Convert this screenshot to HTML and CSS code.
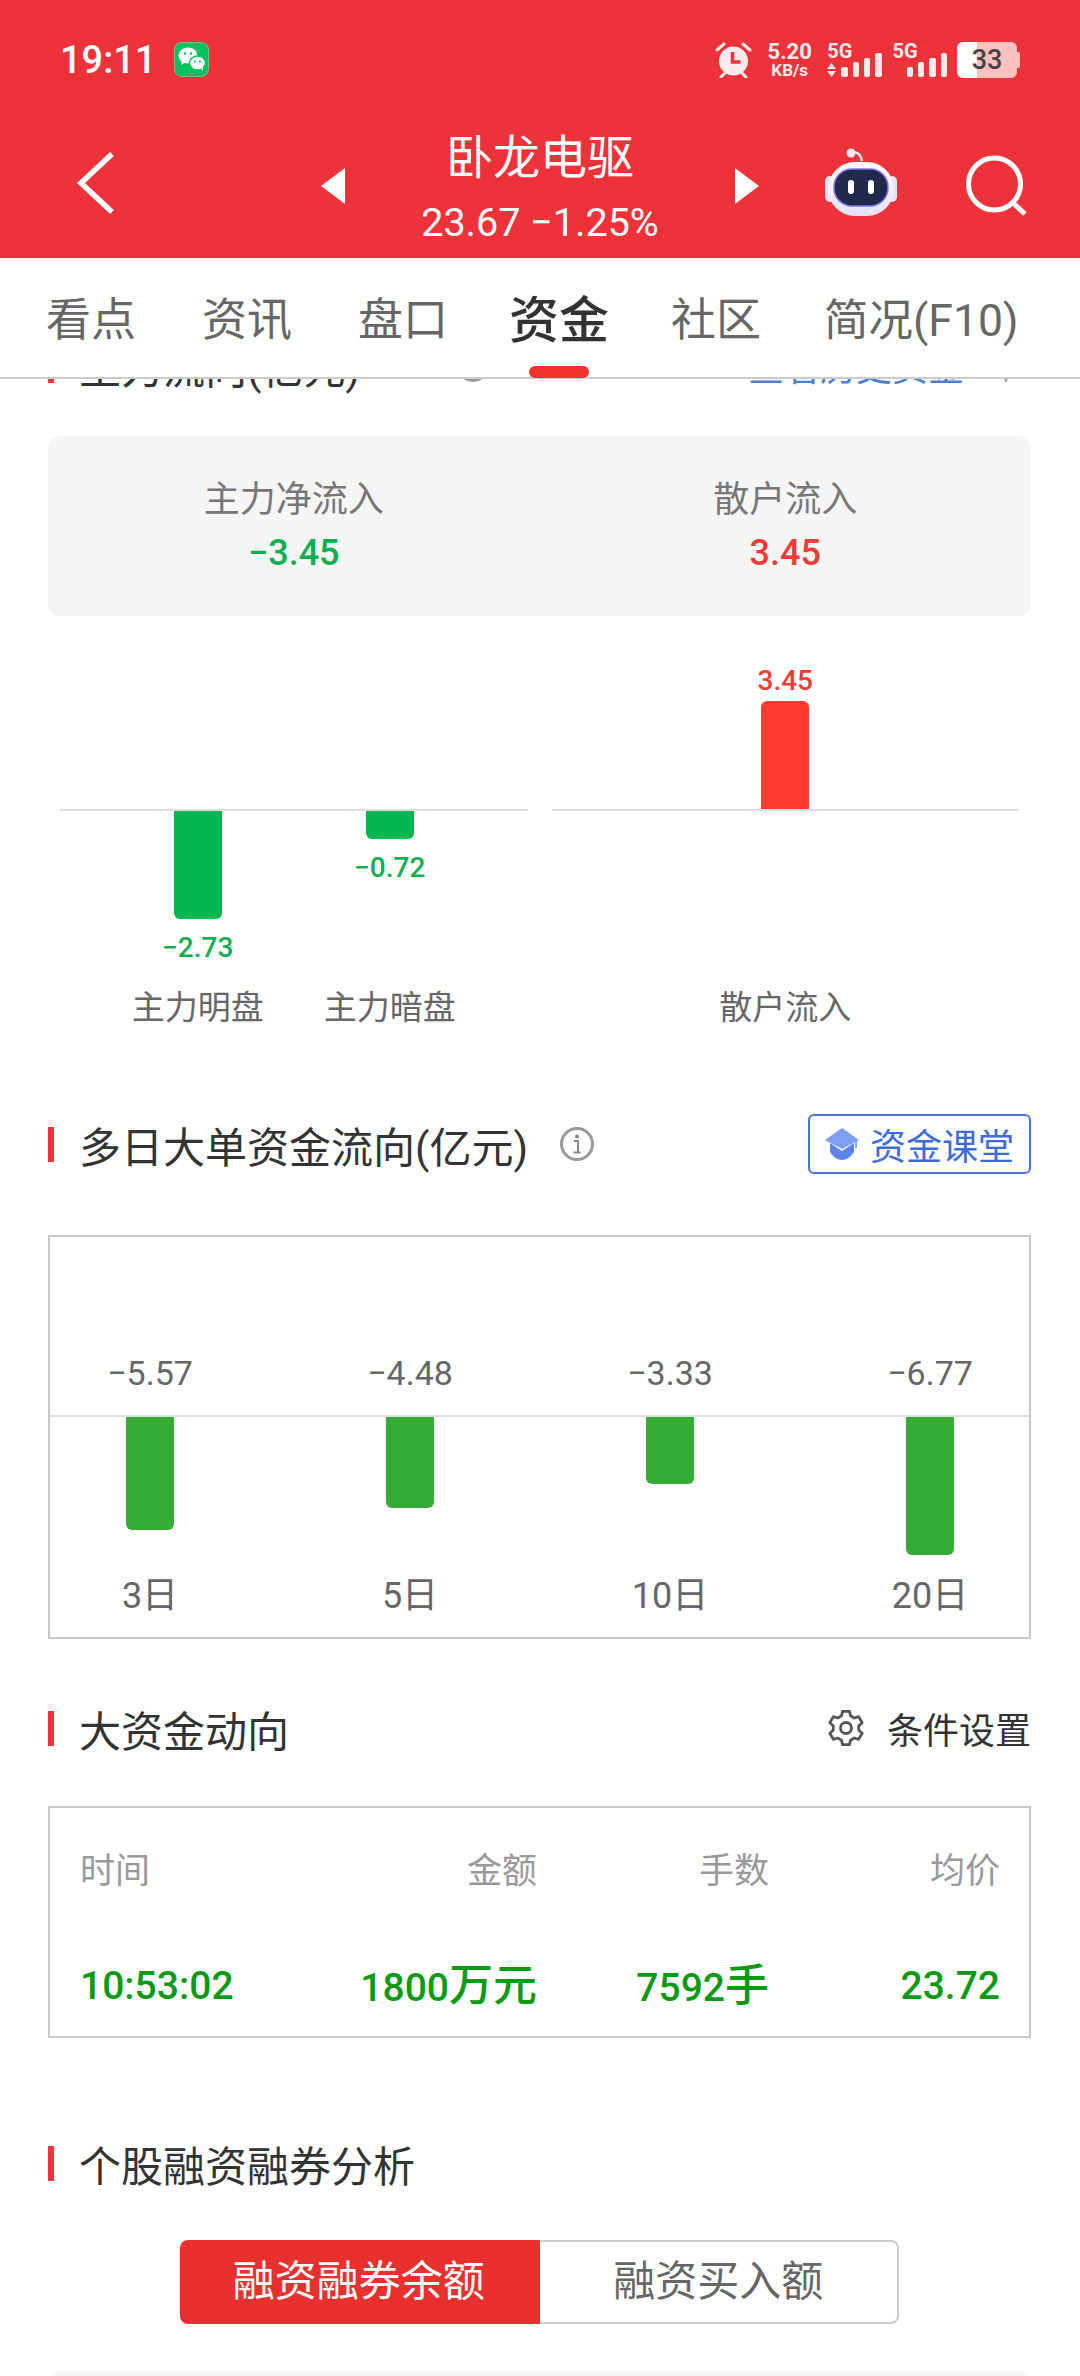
FILE: index.html
```html
<!DOCTYPE html>
<html lang="zh-CN">
<head>
    <meta charset="UTF-8">
    <meta name="viewport" content="width=device-width, initial-scale=1.0">
    <title>卧龙电驱 资金</title>
    <link rel="stylesheet" href="styles.css">
</head>
<body>
<div class="phone">
    <header class="topbar">
        <div class="status">
            <span class="clock">19:11</span>
            <svg class="wechat" width="35" height="35" viewBox="0 0 35 35">
                <rect x="0.5" y="0.5" width="34" height="34" rx="7" fill="#07c160" stroke="#7fb98a"/>
                <ellipse cx="14" cy="13.5" rx="9.5" ry="8" fill="#fff"/>
                <path d="M8 19l-1 4 5-2.500z" fill="#fff"/>
                <ellipse cx="23.500" cy="21" rx="8" ry="7" fill="#fff" stroke="#07c160" stroke-width="1.500"/>
                <path d="M27 26.500l2 2.500 0-4z" fill="#fff"/>
                <circle cx="11" cy="11.500" r="1.300" fill="#07c160"/>
                <circle cx="17" cy="11.500" r="1.300" fill="#07c160"/>
                <circle cx="21" cy="19.500" r="1.100" fill="#07c160"/>
                <circle cx="26" cy="19.500" r="1.100" fill="#07c160"/>
            </svg>
            <div class="status-right">
                <svg class="alarm" width="37" height="36" viewBox="0 0 37 36">
                    <circle cx="18.500" cy="19" r="14.500" fill="#fdeaea"/>
                    <path d="M2 8l7-6M35 8l-7-6M6 35l4-4M31 35l-4-4" stroke="#fdeaea" stroke-width="3" stroke-linecap="round"/>
                    <path d="M17.500 10v10h8" fill="none" stroke="#ee323a" stroke-width="3.500"/>
                </svg>
                <div class="netspeed"><b>5.20</b><span>KB/s</span></div>
                <div class="sig">
                    <div class="sig-label">
                        <span>5G</span>
                        <svg width="9" height="14" viewBox="0 0 9 14"><path d="M4.500 0l4.500 6h-9zM4.500 14l4.500-6h-9z" fill="#fdeaea"/></svg>
                    </div>
                    <div class="bars"><i class="b1"></i><i class="b2"></i><i class="b3"></i><i class="b4"></i></div>
                </div>
                <div class="sig">
                    <div class="sig-label"><span>5G</span></div>
                    <div class="bars"><i class="b1"></i><i class="b2"></i><i class="b3"></i><i class="b4"></i></div>
                </div>
                <div class="battery"><span>33</span></div>
                <i class="battery-nub"></i>
            </div>
        </div>
        <div class="nav">
            <svg class="back" width="50" height="70" viewBox="0 0 50 70">
                <path d="M42 6L11 35l31 29" fill="none" stroke="#fff" stroke-width="5.500"/>
            </svg>
            <span class="tri tri-left"></span>
            <div class="stock">
                <div class="stock-name">卧龙电驱</div>
                <div class="stock-price">23.67 −1.25%</div>
            </div>
            <span class="tri tri-right"></span>
            <svg class="robot" width="80" height="72" viewBox="0 0 80 72">
                <defs>
                    <linearGradient id="robotShell" x1="0" y1="0" x2="0" y2="1">
                        <stop offset="0" stop-color="#ffffff"/>
                        <stop offset="1" stop-color="#e4e2f6"/>
                    </linearGradient>
                </defs>
                <circle cx="30" cy="5" r="4.500" fill="#f3e6ee"/>
                <path d="M32 4c5 0 8 3 9 9" fill="none" stroke="#f3e6ee" stroke-width="2.500"/>
                <rect x="4" y="28" width="10" height="26" rx="5" fill="#e4e2f5"/>
                <rect x="66" y="28" width="10" height="26" rx="5" fill="#e4e2f5"/>
                <rect x="7" y="14" width="66" height="54" rx="27" fill="url(#robotShell)"/>
                <rect x="13" y="21" width="54" height="37" rx="18" fill="#1f2a4c" stroke="#8a6fe0" stroke-width="1.500"/>
                <rect x="27" y="32" width="6" height="14" rx="3" fill="#fff"/>
                <rect x="47" y="32" width="6" height="14" rx="3" fill="#fff"/>
            </svg>
            <svg class="search" width="70" height="70" viewBox="0 0 70 70">
                <circle cx="32.500" cy="35" r="26" fill="none" stroke="#fff" stroke-width="5"/>
                <path d="M51 54l12 11" stroke="#fff" stroke-width="5"/>
            </svg>
        </div>
    </header>

    <nav class="tabs">
        <span class="tab">看点</span>
        <span class="tab">资讯</span>
        <span class="tab">盘口</span>
        <span class="tab tab-active">资金<i class="tab-bar"></i></span>
        <span class="tab">社区</span>
        <span class="tab">简况(F10)</span>
    </nav>

    <main class="content">
        <!-- first section is scrolled under the tabs -->
        <div class="sec-head sec-scrolled">
            <span class="sec-title">主力流向(亿元)</span>
            <svg class="info info-first" width="36" height="36" viewBox="0 0 36 36">
                <circle cx="18" cy="18" r="15.500" fill="none" stroke="#999" stroke-width="3"/>
            </svg>
            <span class="sec-link">查看历史资金</span>
            <svg class="sec-chevron" width="16" height="24" viewBox="0 0 16 24">
                <path d="M2 10l6 12 6-12" fill="none" stroke="#aaa" stroke-width="2"/>
            </svg>
        </div>

        <div class="summary">
            <div class="summary-item">
                <div class="summary-label">主力净流入</div>
                <div class="summary-val down">−3.45</div>
            </div>
            <div class="summary-item">
                <div class="summary-label">散户流入</div>
                <div class="summary-val up">3.45</div>
            </div>
        </div>

        <div class="flow">
            <div class="flow-panel">
                <div class="flow-up"></div>
                <div class="flow-down">
                    <div class="flow-cell">
                        <div class="flow-bar bar-down" style="height: 108px"></div>
                        <div class="flow-num num-below down">−2.73</div>
                    </div>
                    <div class="flow-cell">
                        <div class="flow-bar bar-down" style="height: 28px"></div>
                        <div class="flow-num num-below down">−0.72</div>
                    </div>
                </div>
                <div class="flow-names">
                    <div class="flow-cell">主力明盘</div>
                    <div class="flow-cell">主力暗盘</div>
                </div>
            </div>
            <div class="flow-panel">
                <div class="flow-up">
                    <div class="flow-cell">
                        <div class="flow-num num-above up">3.45</div>
                        <div class="flow-bar bar-up" style="height: 108px"></div>
                    </div>
                </div>
                <div class="flow-down"></div>
                <div class="flow-names">
                    <div class="flow-cell">散户流入</div>
                </div>
            </div>
        </div>

        <div class="sec-head sec-multi">
            <span class="sec-title">多日大单资金流向(亿元)</span>
            <svg class="info" width="36" height="36" viewBox="0 0 36 36">
                <circle cx="18" cy="18" r="15.500" fill="none" stroke="#999" stroke-width="3"/>
                <circle cx="18" cy="10.500" r="2" fill="#888"/>
                <path d="M15 15h4v11M14.500 26.500h7" fill="none" stroke="#888" stroke-width="2"/>
            </svg>
            <div class="class-btn">
                <svg width="34" height="32" viewBox="0 0 34 32">
                    <path d="M5 15v9c3 5 8 8 12 8s9-3 12-8v-9l-12 8z" fill="#5b84f0"/>
                    <path d="M0 12L17 0l17 12-17 9z" fill="#7d9ff2"/>
                    <path d="M31 13v7" stroke="#7d9ff2" stroke-width="2"/>
                </svg>
                <span>资金课堂</span>
            </div>
        </div>

        <div class="box days">
            <div class="days-row days-nums">
                <div>−5.57</div>
                <div>−4.48</div>
                <div>−3.33</div>
                <div>−6.77</div>
            </div>
            <div class="days-row days-bars">
                <div><i class="day-bar" style="height: 113px"></i></div>
                <div><i class="day-bar" style="height: 91px"></i></div>
                <div><i class="day-bar" style="height: 67px"></i></div>
                <div><i class="day-bar" style="height: 138px"></i></div>
            </div>
            <div class="days-row days-names">
                <div>3日</div>
                <div>5日</div>
                <div>10日</div>
                <div>20日</div>
            </div>
        </div>

        <div class="sec-head sec-big">
            <span class="sec-title">大资金动向</span>
            <svg class="gear" width="38" height="38" viewBox="-1 -1 38 38">
                <path d="M13.55 5.78L14.47 1.37H21.53L22.45 5.78L26.36 8.04L30.63 6.62L34.17 12.75L30.80 15.74V20.26L34.17 23.25L30.63 29.38L26.36 27.96L22.45 30.22L21.53 34.63H14.47L13.55 30.22L9.64 27.96L5.37 29.38L1.83 23.25L5.20 20.26V15.74L1.83 12.75L5.37 6.62L9.64 8.04z" fill="none" stroke="#555" stroke-width="2.800" stroke-linejoin="round"/>
                <circle cx="18" cy="18" r="5.500" fill="none" stroke="#555" stroke-width="2.800"/>
            </svg>
            <span class="sec-setting">条件设置</span>
        </div>

        <div class="box trades">
            <div class="trade-row trade-head">
                <div>时间</div>
                <div>金额</div>
                <div>手数</div>
                <div>均价</div>
            </div>
            <div class="trade-row trade-vals">
                <div>10:53:02</div>
                <div>1800<span class="unit">万元</span></div>
                <div>7592<span class="unit">手</span></div>
                <div>23.72</div>
            </div>
        </div>

        <div class="sec-head sec-margin">
            <span class="sec-title">个股融资融券分析</span>
        </div>

        <div class="seg">
            <div class="seg-item seg-on">融资融券余额</div>
            <div class="seg-item">融资买入额</div>
        </div>

        <div class="next-card"></div>
    </main>
</div>
</body>
</html>
```

FILE: styles.css
```css
* {
    box-sizing: border-box;
}
body {
    margin: 0;
    background: white;
    font-family: Roboto, "Noto Sans CJK SC", sans-serif;
    color: #333;
}
.phone {
    width: 1080px;
    height: 2376px;
    overflow: hidden;
    display: flex;
    flex-direction: column;
}

/* red header */
.topbar {
    height: 258px;
    background: #ee323a;
    color: white;
}
.status {
    height: 96px;
    padding: 42px 60px 0 60px;
    display: flex;
    align-items: flex-start;
}
.clock {
    font-size: 38px;
    font-weight: 500;
    line-height: 36px;
}
.wechat {
    margin-left: 18px;
}
.status-right {
    margin-left: auto;
    display: flex;
    align-items: flex-start;
    color: #fdeaea;
}
.netspeed {
    margin-left: 15px;
    width: 45px;
    text-align: center;
    display: flex;
    flex-direction: column;
    align-items: center;
}
.netspeed b {
    font-size: 22px;
    line-height: 20px;
    font-weight: 700;
}
.netspeed span {
    font-size: 17px;
    line-height: 16px;
    font-weight: 700;
}
.sig {
    height: 36px;
    display: flex;
    margin-left: 15px;
}
.sig + .sig {
    margin-left: 11px;
}
.sig-label {
    width: 23px;
    font-size: 20px;
    font-weight: 700;
    line-height: 18px;
    display: flex;
    flex-direction: column;
    gap: 3px;
}
.bars {
    margin-left: -9px;
    height: 35px;
    display: flex;
    align-items: flex-end;
    gap: 4.8px;
}
.bars i {
    display: block;
    width: 6.5px;
    background: #fdeaea;
    border-radius: 2px;
}
.bars .b1 { height: 10px; }
.bars .b2 { height: 15px; }
.bars .b3 { height: 19px; }
.bars .b4 { height: 24px; }
.battery {
    margin-left: 10px;
    width: 60px;
    height: 36px;
    border-radius: 6px;
    background: linear-gradient(90deg, #fff 20px, #ffc0c0 20px);
    color: #444;
    font-size: 27px;
    font-weight: 500;
    line-height: 36px;
    text-align: center;
}
.battery-nub {
    display: block;
    width: 3px;
    height: 16px;
    margin-top: 10px;
    background: #ffc0c0;
    border-radius: 0 2px 2px 0;
}
.nav {
    height: 162px;
    padding-left: 70px;
    display: flex;
    align-items: flex-start;
}
.back {
    margin-top: 52px;
}
.tri {
    width: 0;
    height: 0;
    margin-top: 72px;
    border-top: 18px solid transparent;
    border-bottom: 18px solid transparent;
}
.tri-left {
    margin-left: 201px;
    border-right: 24px solid white;
}
.tri-right {
    margin-left: 15px;
    border-left: 24px solid white;
}
.stock {
    width: 360px;
    margin: 34px 0 0 15px;
    text-align: center;
}
.stock-name {
    font-size: 47px;
    line-height: 56px;
}
.stock-price {
    margin-top: 12px;
    font-size: 39.5px;
    line-height: 50px;
}
.robot {
    margin: 52px 0 0 62px;
}
.search {
    margin: 53px 0 0 61px;
}

/* tabs */
.tabs {
    height: 121px;
    padding: 31px 0 0 46px;
    display: flex;
    gap: 66px;
    align-items: flex-start;
    border-bottom: 2px solid #ccc;
}
.tab {
    font-size: 45px;
    line-height: 64px;
    color: #666;
    display: flex;
    flex-direction: column;
    align-items: center;
}
.tab:last-child {
    margin-left: -3px;
    font-size: 44.5px;
}
.tab-active {
    margin: 0 -4px 0 -5px;
    font-size: 50px;
    font-weight: 500;
    color: #333;
}
.tab-bar {
    display: block;
    width: 60px;
    height: 12px;
    margin-top: 13px;
    border-radius: 6px;
    background: #f5312f;
}

/* scroll area */
.content {
    flex: 1;
    overflow: hidden;
    padding: 0 49px 0 48px;
}
.sec-head {
    height: 60px;
    display: flex;
    align-items: center;
}
.sec-head::before {
    content: "";
    width: 6px;
    height: 35px;
    margin-right: 25px;
    background: #e8383d;
}
.sec-title {
    font-size: 42px;
    color: #333;
}
.sec-scrolled {
    margin-top: -44px;
}
.sec-multi {
    margin-top: 83px;
}
.sec-big {
    margin-top: 59px;
}
.sec-margin {
    margin-top: 95px;
}
.info {
    margin-left: 31px;
}
.info-first {
    margin-left: 95px;
}
.sec-link {
    margin-left: auto;
    font-size: 36px;
    color: #4a80d0;
}
.sec-chevron {
    margin: 12px 17px 0 34px;
}
.class-btn {
    margin-left: auto;
    width: 223px;
    height: 60px;
    padding-left: 15px;
    display: flex;
    align-items: center;
    gap: 11px;
    border: 2px solid #4a74d8;
    border-radius: 6px;
    color: #3e6bd6;
    font-size: 36px;
}
.gear {
    margin-left: auto;
}
.sec-setting {
    margin-left: 22px;
    font-size: 36px;
    color: #333;
}

/* summary card */
.summary {
    height: 180px;
    margin-top: 41px;
    padding-top: 40px;
    display: grid;
    grid-template-columns: 1fr 1fr;
    background: #f5f5f5;
    border-radius: 12px;
    text-align: center;
}
.summary-label {
    font-size: 36px;
    line-height: 48px;
    color: #777;
}
.summary-val {
    margin-top: 4px;
    font-size: 36px;
    font-weight: 500;
    line-height: 50px;
}
.down {
    color: #0cb050;
}
.up {
    color: #ee3b35;
}

/* main / retail bars */
.flow {
    padding: 0 12px;
    display: flex;
    gap: 24px;
}
.flow-panel {
    width: 468px;
}
.flow-up,
.flow-down,
.flow-names {
    display: flex;
    justify-content: center;
}
.flow-up {
    height: 195px;
    align-items: flex-end;
    border-bottom: 2px solid #ddd;
}
.flow-down {
    height: 174px;
}
.flow-names {
    height: 46px;
    font-size: 33px;
    line-height: 46px;
    color: #666;
}
.flow-cell {
    width: 192px;
    display: flex;
    flex-direction: column;
    align-items: center;
}
.flow-bar {
    width: 48px;
}
.bar-down {
    background: #04b550;
    border-radius: 0 0 6px 6px;
}
.bar-up {
    background: #ff3b30;
    border-radius: 6px 6px 0 0;
}
.flow-num {
    font-size: 28px;
    font-weight: 500;
    line-height: 32px;
}
.num-below {
    margin-top: 13px;
}
.num-above {
    margin-bottom: 4px;
}

/* bordered boxes */
.box {
    border: 2px solid #c8c8c8;
}
.days {
    margin-top: 61px;
    padding-bottom: 18px;
}
.days-row {
    display: grid;
    grid-template-columns: repeat(4, 200px);
    column-gap: 60px;
    text-align: center;
}
.days-nums {
    height: 180px;
    padding-bottom: 22px;
    align-items: end;
    border-bottom: 2px solid #ddd;
    font-size: 34px;
    line-height: 40px;
    color: #666;
}
.days-bars {
    height: 156px;
}
.day-bar {
    display: block;
    width: 48px;
    margin: 0 auto;
    background: #36ab35;
    border-radius: 0 0 6px 6px;
}
.days-names {
    height: 46px;
    font-size: 36px;
    line-height: 46px;
    color: #666;
}
.trades {
    margin-top: 48px;
    height: 232px;
    padding: 40px 29px 0 30px;
}
.trade-row {
    display: grid;
    grid-template-columns: 225px 232px 232px 231px;
    text-align: right;
}
.trade-row div:first-child {
    text-align: left;
}
.trade-head {
    font-size: 35px;
    line-height: 48px;
    color: #999;
}
.trade-vals {
    margin-top: 62px;
    font-size: 39px;
    font-weight: 500;
    line-height: 56px;
    color: #0a9a14;
}
.unit {
    font-size: 44px;
}

/* segmented switch */
.seg {
    width: 719px;
    height: 84px;
    margin: 47px 0 0 132px;
    display: flex;
}
.seg-item {
    flex: 1;
    font-size: 42px;
    line-height: 80px;
    text-align: center;
    color: #666;
    border: 2px solid #ccc;
    border-left: 0;
    border-radius: 0 8px 8px 0;
}
.seg-on {
    color: white;
    background: #e8302f;
    border-color: #e8302f;
    border-radius: 8px 0 0 8px;
}
.next-card {
    height: 100px;
    margin: 47px 1px 0 2px;
    background: #f5f5f5;
    border-radius: 10px;
}
```
